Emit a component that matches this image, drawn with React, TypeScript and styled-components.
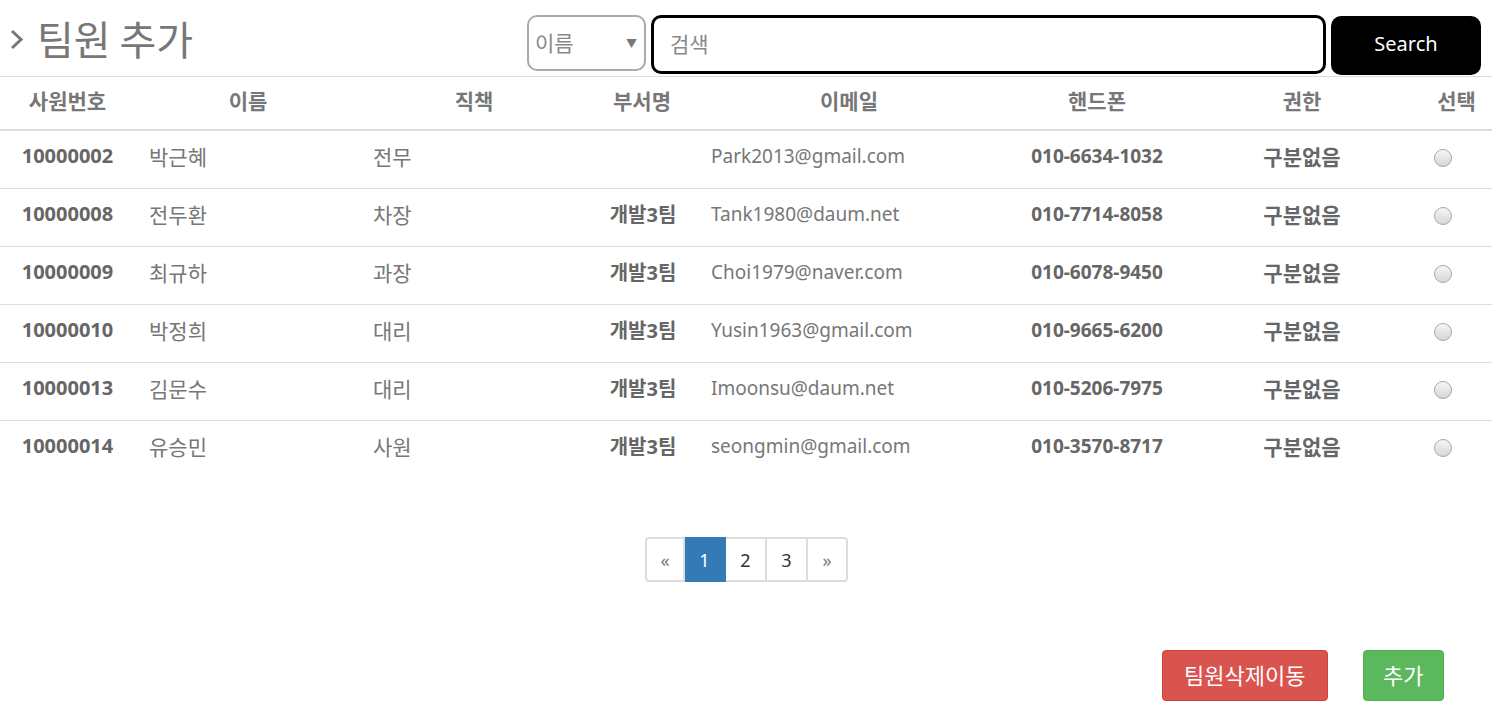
import React from 'react'
import styled, { createGlobalStyle } from 'styled-components'

interface Member {
  id: string
  name: string
  position: string
  dept: string
  email: string
  phone: string
  role: string
}

const members: Member[] = [
  { id: '10000002', name: '박근혜', position: '전무', dept: '', email: 'Park2013@gmail.com', phone: '010-6634-1032', role: '구분없음' },
  { id: '10000008', name: '전두환', position: '차장', dept: '개발3팀', email: 'Tank1980@daum.net', phone: '010-7714-8058', role: '구분없음' },
  { id: '10000009', name: '최규하', position: '과장', dept: '개발3팀', email: 'Choi1979@naver.com', phone: '010-6078-9450', role: '구분없음' },
  { id: '10000010', name: '박정희', position: '대리', dept: '개발3팀', email: 'Yusin1963@gmail.com', phone: '010-9665-6200', role: '구분없음' },
  { id: '10000013', name: '김문수', position: '대리', dept: '개발3팀', email: 'Imoonsu@daum.net', phone: '010-5206-7975', role: '구분없음' },
  { id: '10000014', name: '유승민', position: '사원', dept: '개발3팀', email: 'seongmin@gmail.com', phone: '010-3570-8717', role: '구분없음' },
]

const GlobalStyle = createGlobalStyle`
  body {
    margin: 0;
    background: #fff;
    font-family: "Noto Sans", "Noto Sans CJK KR", sans-serif;
    color: #777;
  }
`

const App: React.FC = () => {
  return (
    <Page>
      <GlobalStyle />
      <TopBar>
        <Title>
          <svg width="16" height="24" viewBox="0 0 16 24">
            <path d="M3 4 L12 12.5 L3 21" fill="none" stroke="#777" strokeWidth="3" />
          </svg>
          팀원 추가
        </Title>
        <SearchForm>
          <SelectBox>
            <span>이름</span>
            <Caret>▼</Caret>
          </SelectBox>
          <SearchInput placeholder="검색" />
          <SearchButton>Search</SearchButton>
        </SearchForm>
      </TopBar>

      <Table>
        <colgroup>
          <col style={{ width: 135 }} />
          <col style={{ width: 226 }} />
          <col style={{ width: 226 }} />
          <col style={{ width: 110 }} />
          <col style={{ width: 304 }} />
          <col style={{ width: 192 }} />
          <col style={{ width: 218 }} />
          <col style={{ width: 81 }} />
        </colgroup>
        <thead>
          <tr>
            <Th>사원번호</Th>
            <Th>이름</Th>
            <Th>직책</Th>
            <Th>부서명</Th>
            <Th>이메일</Th>
            <Th>핸드폰</Th>
            <Th>권한</Th>
            <Th $shift={10}>선택</Th>
          </tr>
        </thead>
        <tbody>
          {members.map((m, i) => (
            <Row key={m.id} $last={i === members.length - 1}>
              <Td $bold $align="center" $size={20}>{m.id}</Td>
              <Td $pad={14}>{m.name}</Td>
              <Td $pad={12}>{m.position}</Td>
              <Td $bold $align="center" $size={20} $pad={2}>{m.dept}</Td>
              <Td $pad={14} $size={19}>{m.email}</Td>
              <Td $bold $align="center" $size={19}>{m.phone}</Td>
              <Td $bold $align="center">{m.role}</Td>
              <Td $align="center">
                <Radio type="radio" name="pick" />
              </Td>
            </Row>
          ))}
        </tbody>
      </Table>

      <Pager>
        <PageItem $edge="left">«</PageItem>
        <PageItem $active>1</PageItem>
        <PageItem>2</PageItem>
        <PageItem>3</PageItem>
        <PageItem $edge="right">»</PageItem>
      </Pager>

      <Actions>
        <ActionButton $variant="danger">팀원삭제이동</ActionButton>
        <ActionButton $variant="success">추가</ActionButton>
      </Actions>
    </Page>
  )
}

export default App

const Page = styled.div`
  width: 1492px;
`

const TopBar = styled.div`
  height: 76px;
  display: flex;
  justify-content: space-between;
  align-items: flex-start;
  border-bottom: 1px solid #ddd;
`

const Title = styled.h1`
  margin: 0;
  padding: 10px 0 0 9px;
  display: flex;
  align-items: center;
  gap: 12px;
  font-size: 40px;
  font-weight: 400;
  line-height: 56px;
  color: #777;
  font-family: "Noto Sans CJK KR", sans-serif;
  & svg {
    margin-top: 2px;
  }
`

const SearchForm = styled.div`
  display: flex;
  align-items: flex-start;
  gap: 5px;
  padding: 15px 11px 0 0;
`

const SelectBox = styled.div`
  box-sizing: border-box;
  width: 119px;
  height: 56px;
  border: 2px solid #aaa;
  border-radius: 10px;
  display: flex;
  align-items: center;
  justify-content: space-between;
  padding: 0 7px 3px 6px;
  font-size: 21px;
  color: #888;
  font-family: "Noto Sans CJK KR", sans-serif;
`

const Caret = styled.span`
  font-size: 11px;
  color: #777;
  padding-top: 3px;
`

const SearchInput = styled.input`
  box-sizing: border-box;
  width: 675px;
  height: 59px;
  border: 3px solid #000;
  border-radius: 10px;
  padding: 0 16px 4px;
  font-size: 21px;
  font-family: "Noto Sans CJK KR", sans-serif;
  outline: none;
  &::placeholder {
    color: #888;
  }
`

const SearchButton = styled.button`
  box-sizing: border-box;
  width: 150px;
  height: 59px;
  margin-top: 1px;
  padding-bottom: 5px;
  border: 0;
  border-radius: 10px;
  background: #000;
  color: #fff;
  font-size: 20px;
  font-family: "Noto Sans", sans-serif;
`

const Table = styled.table`
  width: 1492px;
  table-layout: fixed;
  border-collapse: collapse;
`

const Th = styled.th<{ $shift?: number }>`
  box-sizing: border-box;
  height: 53px;
  padding: 0 0 6px ${(p) => p.$shift ?? 0}px;
  line-height: 30px;
  text-align: center;
  font-size: 21px;
  font-weight: 700;
  color: #777;
  border-bottom: 2px solid #ddd;
  font-family: "Noto Sans CJK KR", sans-serif;
`

const Row = styled.tr<{ $last?: boolean }>`
  height: 58px;
  border-bottom: ${(p) => (p.$last ? 'none' : '1px solid #ddd')};
`

const Td = styled.td<{ $bold?: boolean; $align?: string; $pad?: number; $size?: number }>`
  padding: 0 0 7px ${(p) => p.$pad ?? 0}px;
  text-align: ${(p) => p.$align ?? 'left'};
  font-size: ${(p) => p.$size ?? 21}px;
  font-weight: ${(p) => (p.$bold ? 700 : 400)};
  color: ${(p) => (p.$bold ? '#666' : '#777')};
  white-space: nowrap;
`

const Radio = styled.input`
  appearance: none;
  width: 18px;
  height: 18px;
  margin: 10px 18px 0 0;
  border-radius: 50%;
  border: 1px solid #a8a8a8;
  background: linear-gradient(to bottom, #f6f6f6, #d6d6d6);
`

const Pager = styled.div`
  display: flex;
  justify-content: center;
  margin-top: 59px;
  padding-left: 1px;
`

const PageItem = styled.div<{ $active?: boolean; $edge?: 'left' | 'right' }>`
  box-sizing: border-box;
  width: ${(p) => (p.$edge ? 40 : 41)}px;
  height: 45px;
  display: flex;
  align-items: center;
  justify-content: center;
  border: 2px solid ${(p) => (p.$active ? '#337ab7' : '#ddd')};
  border-left-width: ${(p) => (p.$edge === 'left' ? 2 : 0)}px;
  border-radius: ${(p) => (p.$edge === 'left' ? '4px 0 0 4px' : p.$edge === 'right' ? '0 4px 4px 0' : '0')};
  background: ${(p) => (p.$active ? '#337ab7' : '#fff')};
  color: ${(p) => (p.$active ? '#fff' : p.$edge ? '#777' : '#333')};
  font-size: 18px;
  font-family: "Noto Sans", sans-serif;
`

const Actions = styled.div`
  display: flex;
  justify-content: flex-end;
  gap: 35px;
  margin-top: 68px;
  padding-right: 48px;
`

const ActionButton = styled.button<{ $variant: 'danger' | 'success' }>`
  height: 51px;
  padding: 0 ${(p) => (p.$variant === 'danger' ? 21 : 19.5)}px 3px;
  border-radius: 4px;
  border: 1px solid ${(p) => (p.$variant === 'danger' ? '#d43f3a' : '#4cae4c')};
  background: ${(p) => (p.$variant === 'danger' ? '#d9534f' : '#5cb85c')};
  color: #fff;
  font-size: 22px;
  font-family: "Noto Sans CJK KR", sans-serif;
`
